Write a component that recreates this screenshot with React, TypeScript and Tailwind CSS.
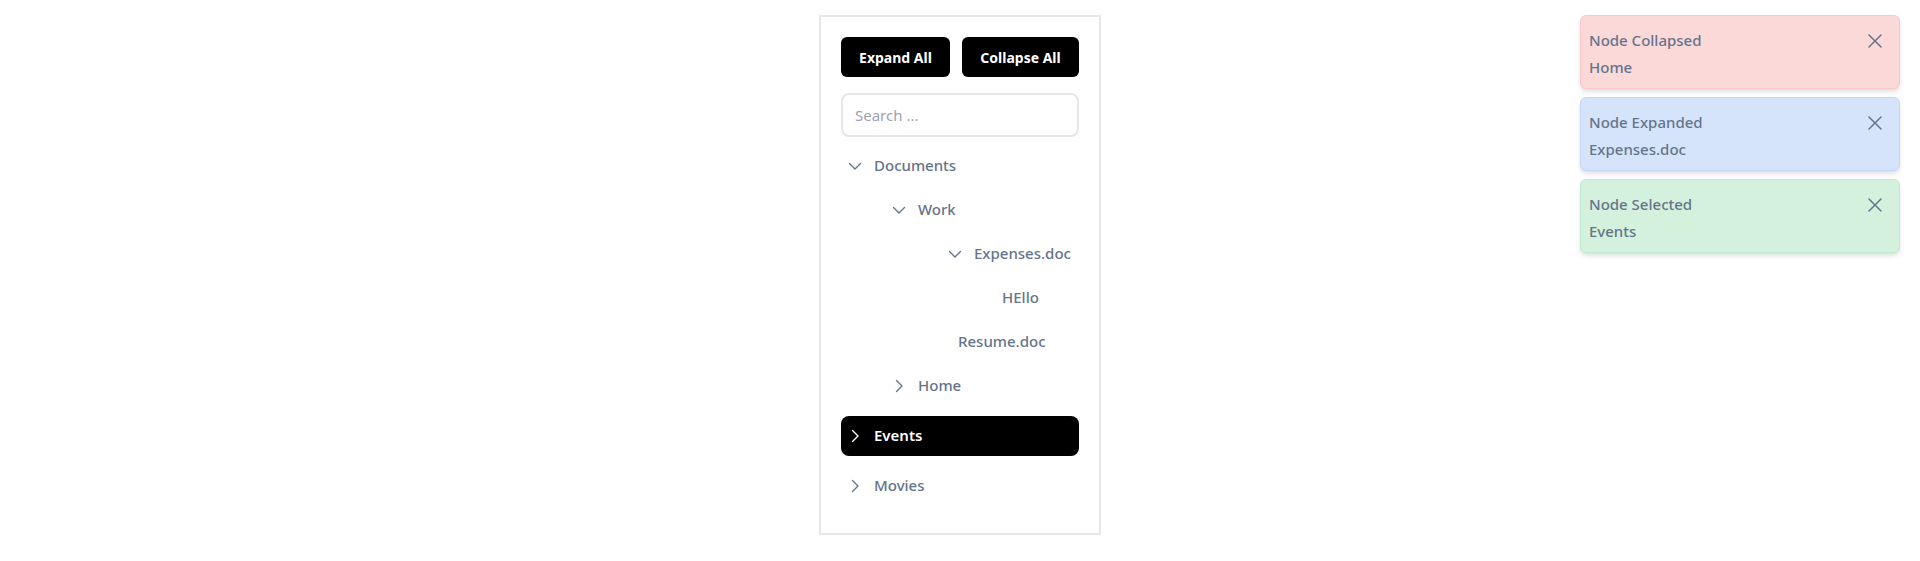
import React from "react";

const font = { fontFamily: '"Noto Sans", "Open Sans", sans-serif' };

function ChevronDown() {
  return (
    <svg width="14" height="14" viewBox="0 0 14 14" fill="none">
      <path d="M1.5 4.5 L7 10 L12.5 4.5" stroke="currentColor" strokeWidth="1.4" strokeLinecap="round" strokeLinejoin="round" />
    </svg>
  );
}

function ChevronRight() {
  return (
    <svg width="14" height="14" viewBox="0 0 14 14" fill="none">
      <path d="M4.5 1.5 L10 7 L4.5 12.5" stroke="currentColor" strokeWidth="1.4" strokeLinecap="round" strokeLinejoin="round" />
    </svg>
  );
}

function CloseIcon() {
  return (
    <svg width="14" height="14" viewBox="0 0 14 14" fill="none">
      <path d="M1 1 L13 13 M13 1 L1 13" stroke="currentColor" strokeWidth="1.5" strokeLinecap="round" />
    </svg>
  );
}

type RowProps = {
  label: string;
  pl: string;
  toggle?: "down" | "right";
  selected?: boolean;
};

function Row({ label, pl, toggle, selected }: RowProps) {
  return (
    <div
      className={`flex h-10 items-center rounded-lg ${pl} ${
        selected ? "bg-black text-white font-semibold" : "text-[#64748b] font-medium"
      }`}
    >
      {toggle && (
        <span className="mr-3 flex h-[14px] w-[14px] items-center justify-center">
          {toggle === "down" ? <ChevronDown /> : <ChevronRight />}
        </span>
      )}
      <span className="-mt-[2px] text-[15px] leading-none">{label}</span>
    </div>
  );
}

function Toast({
  title,
  detail,
  bg,
  border,
}: {
  title: string;
  detail: string;
  bg: string;
  border: string;
}) {
  return (
    <div className={`flex h-[74px] w-[320px] items-start rounded-md border shadow-md ${bg} ${border}`}>
      <div className="flex flex-1 flex-col pl-2 pt-[14px] text-[15px] font-medium leading-5 text-[#64748b]">
        <div>{title}</div>
        <div className="mt-[7px]">{detail}</div>
      </div>
      <div className="mr-[17px] mt-[18px] text-[#64748b]">
        <CloseIcon />
      </div>
    </div>
  );
}

export default function App() {
  return (
    <div className="relative min-h-[561px] w-full bg-white" style={font}>
      <div className="flex justify-center pt-[15px]">
        <div className="flex w-[282px] flex-col border-2 border-[#e5e7eb] px-5 pb-[27px] pt-5">
          <div className="flex gap-3">
            <button className="h-10 w-[109px] whitespace-nowrap rounded-md bg-black text-[14px] font-bold text-white">
              Expand All
            </button>
            <button className="h-10 w-[117px] whitespace-nowrap rounded-md bg-black text-[14px] font-bold text-white">
              Collapse All
            </button>
          </div>
          <input
            className="mt-4 h-11 w-full rounded-lg border-2 border-[#e5e7eb] px-3 text-[15px] text-[#374151] placeholder:text-[#9ca3af] outline-none"
            placeholder="Search ..."
          />
          <div className="mt-[9px] flex flex-col">
            <div className="flex flex-col gap-1">
              <Row label="Documents" pl="pl-[7px]" toggle="down" />
              <Row label="Work" pl="pl-[51px]" toggle="down" />
              <Row label="Expenses.doc" pl="pl-[107px]" toggle="down" />
              <Row label="HEllo" pl="pl-[161px]" />
              <Row label="Resume.doc" pl="pl-[117px]" />
              <Row label="Home" pl="pl-[51px]" toggle="right" />
            </div>
            <div className="mt-[10px]">
              <Row label="Events" pl="pl-[7px]" toggle="right" selected />
            </div>
            <div className="mt-[10px]">
              <Row label="Movies" pl="pl-[7px]" toggle="right" />
            </div>
          </div>
        </div>
      </div>

      <div className="absolute right-5 top-[15px] flex flex-col gap-2">
        <Toast title="Node Collapsed" detail="Home" bg="bg-[#fcd9d9]" border="border-[#fbc8c8]" />
        <Toast title="Node Expanded" detail="Expenses.doc" bg="bg-[#d6e4fb]" border="border-[#c2d7f9]" />
        <Toast title="Node Selected" detail="Events" bg="bg-[#d4f1dd]" border="border-[#bdebcb]" />
      </div>
    </div>
  );
}
